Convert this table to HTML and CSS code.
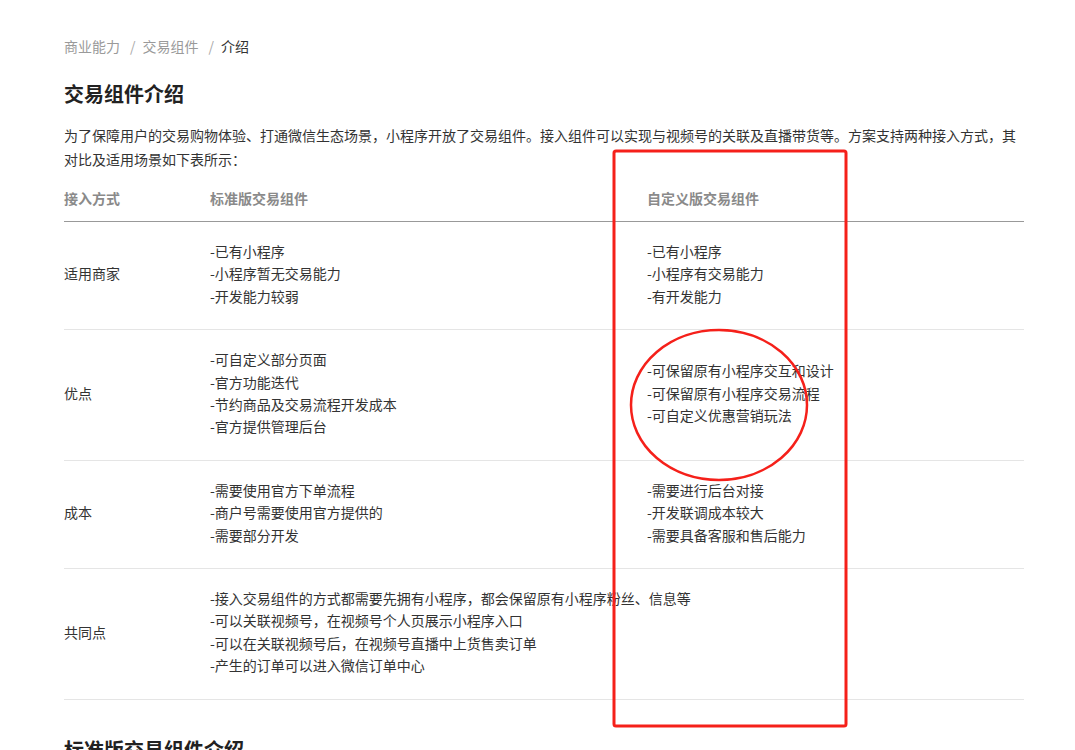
FILE: index.html
```html
<!DOCTYPE html>
<html lang="zh-CN">
<head>
<meta charset="utf-8">
<title>交易组件介绍</title>
<link rel="stylesheet" href="styles.css">
</head>
<body>
<div class="page">
  <nav class="crumbs">
    <span class="crumb">商业能力</span><span class="sep">/</span><span class="crumb">交易组件</span><span class="sep">/</span><span class="crumb current">介绍</span>
  </nav>
  <h1 class="title">交易组件介绍</h1>
  <p class="intro">为了保障用户的交易购物体验、打通微信生态场景，小程序开放了交易组件。接入组件可以实现与视频号的关联及直播带货等。方案支持两种接入方式，其对比及适用场景如下表所示：</p>
  <table class="cmp">
    <colgroup><col class="c1"><col class="c2"><col class="c3"></colgroup>
    <thead>
      <tr><th>接入方式</th><th>标准版交易组件</th><th>自定义版交易组件</th></tr>
    </thead>
    <tbody>
      <tr>
        <td>适用商家</td>
        <td>-已有小程序<br>-小程序暂无交易能力<br>-开发能力较弱</td>
        <td>-已有小程序<br>-小程序有交易能力<br>-有开发能力</td>
      </tr>
      <tr>
        <td>优点</td>
        <td>-可自定义部分页面<br>-官方功能迭代<br>-节约商品及交易流程开发成本<br>-官方提供管理后台</td>
        <td>-可保留原有小程序交互和设计<br>-可保留原有小程序交易流程<br>-可自定义优惠营销玩法</td>
      </tr>
      <tr>
        <td>成本</td>
        <td>-需要使用官方下单流程<br>-商户号需要使用官方提供的<br>-需要部分开发</td>
        <td>-需要进行后台对接<br>-开发联调成本较大<br>-需要具备客服和售后能力</td>
      </tr>
      <tr>
        <td>共同点</td>
        <td class="wide" colspan="2">-接入交易组件的方式都需要先拥有小程序，都会保留原有小程序粉丝、信息等<br>-可以关联视频号，在视频号个人页展示小程序入口<br>-可以在关联视频号后，在视频号直播中上货售卖订单<br>-产生的订单可以进入微信订单中心</td>
      </tr>
    </tbody>
  </table>
  <h2 class="subtitle">标准版交易组件介绍</h2>
</div>
<svg class="marks" width="1075" height="750" viewBox="0 0 1075 750" aria-hidden="true">
  <rect x="614" y="151" width="232" height="575" rx="2" fill="none" stroke="#f5201a" stroke-width="3"/>
  <ellipse cx="719" cy="405" rx="88" ry="75" fill="none" stroke="#f5201a" stroke-width="2.5"/>
</svg>
</body>
</html>
```
FILE: styles.css
```css
html, body {
  margin: 0;
  padding: 0;
  background: #fff;
}
body {
  font-family: "Noto Sans CJK SC", "Liberation Sans", sans-serif;
  color: #333;
  font-size: 14px;
  overflow: hidden;
}
.page {
  width: 960px;
  padding: 35px 0 0 64px;
}
.crumbs {
  line-height: 22px;
  font-size: 14px;
  color: #9a9a9a;
  display: flex;
}
.sep {
  color: #aaa;
  margin: 0 7px 0 10px;
}
.current {
  color: #333;
}
.title {
  margin: 23px 0 0;
  font-size: 20px;
  line-height: 28px;
  font-weight: 700;
  color: #222;
}
.intro {
  margin: 15px 0 0;
  line-height: 24px;
  font-size: 14px;
  color: #333;
}
.cmp {
  margin-top: 8px;
  width: 960px;
  border-collapse: collapse;
  table-layout: fixed;
}
.c1 { width: 146px; }
.c2 { width: 437px; }
.c3 { width: 377px; }
.cmp th {
  text-align: left;
  font-weight: 700;
  color: #8a8a8a;
  font-size: 14px;
  line-height: 22px;
  padding: 8px 0 12px;
  border-bottom: 1px solid #999;
}
.cmp td {
  padding: 18px 0 22px;
  line-height: 22.4px;
  vertical-align: middle;
  color: #333;
  border-bottom: 1px solid #e5e5e5;
}
.subtitle {
  margin: 36px 0 0;
  font-size: 20px;
  line-height: 28px;
  font-weight: 700;
  color: #222;
}
.marks {
  position: absolute;
  left: 0;
  top: 0;
  pointer-events: none;
}
```
